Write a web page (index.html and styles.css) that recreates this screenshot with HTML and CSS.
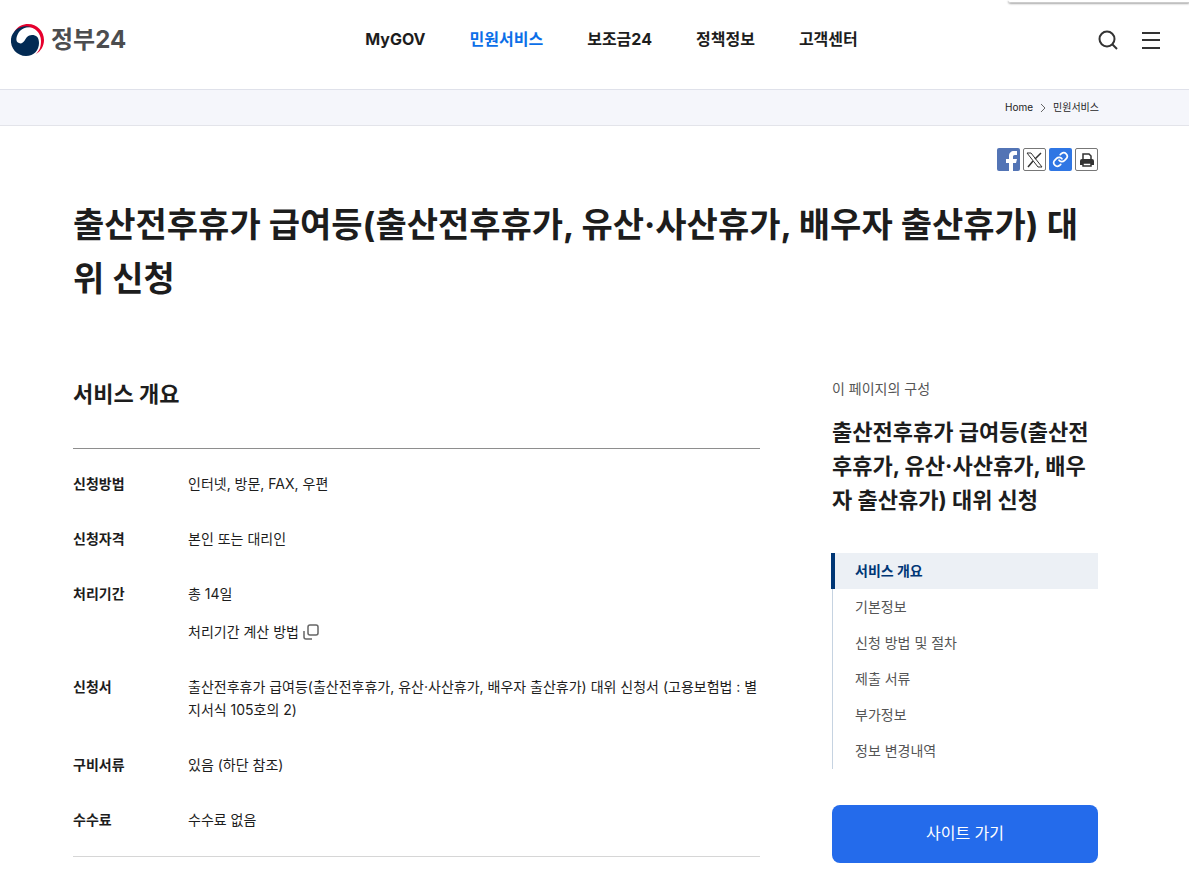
FILE: index.html
```html
<!DOCTYPE html>
<html lang="ko">
<head>
    <meta charset="UTF-8">
    <meta name="viewport" content="width=device-width, initial-scale=1.0">
    <title>출산전후휴가 급여등 대위 신청 | 정부24</title>
    <link rel="stylesheet" href="styles.css">
</head>
<body>
    <div class="top-panel"></div>
    <header class="header">
        <a href="#" class="logo">
            <svg width="34" height="34" viewBox="0 0 34 34" aria-hidden="true">
                <path d="M4 9C8 3 13 1 18 1C27 1 34 8 34 17C34 23 31 28 26 31C30 27 31 23 31 18C31 10 25 4 17 4C12 4 8 6 4 9Z" fill="#e6002d"/>
                <path d="M21 4C12 1 2 7 1 16C0 25 7 33 16 33C24 33 29 27 29 20C29 14 26 12 22 12C18 12 16 15 15 17C13 20 11 21 9 20C6 19 6 16 7 13C9 7 14 4 21 4Z" fill="#032b54"/>
            </svg>
            <span>정부24</span>
        </a>
        <nav class="gnb">
            <a href="#mygov">MyGOV</a>
            <a href="#service" class="active">민원서비스</a>
            <a href="#subsidy">보조금24</a>
            <a href="#policy">정책정보</a>
            <a href="#help">고객센터</a>
        </nav>
        <div class="header-tools">
            <button type="button" aria-label="검색">
                <svg width="20" height="20" viewBox="0 0 20 20" fill="none" stroke="#333" stroke-width="2">
                    <circle cx="9" cy="9" r="7.5"/>
                    <path d="M14 14L19 19"/>
                </svg>
            </button>
            <button type="button" aria-label="전체메뉴">
                <svg width="20" height="20" viewBox="0 0 20 20" fill="none" stroke="#333" stroke-width="2">
                    <path d="M1 3H19M1 10H19M1 18H19"/>
                </svg>
            </button>
        </div>
    </header>

    <div class="breadcrumb">
        <a href="#">Home</a>
        <svg width="6" height="8" viewBox="0 0 6 8" fill="none" stroke="#666"><path d="M1 0L5 4L1 8"/></svg>
        <a href="#service">민원서비스</a>
    </div>

    <main class="container">
        <div class="share">
            <button type="button" class="facebook" aria-label="페이스북">
                <svg width="23" height="23" viewBox="0 0 23 23"><path d="M12 23V15H9V11H12V8C12 5 14 3 17 3H20V7H18C16 7 16 8 16 9V11H20L19 15H16V23Z" fill="#fff"/></svg>
            </button>
            <button type="button" class="outline" aria-label="X">
                <svg width="17" height="17" viewBox="0 0 17 17" fill="none" stroke="#333"><path d="M1 2H5L16 16H12Z"/><path d="M15 2L9 8M7 10L2 16" stroke-width="1.5"/></svg>
            </button>
            <button type="button" class="link" aria-label="링크 복사">
                <svg width="17" height="17" viewBox="0 0 24 24" fill="none" stroke="#fff" stroke-width="2.4" stroke-linecap="round"><path d="M10 13a5 5 0 0 0 7.5.5l3-3a5 5 0 0 0-7-7l-1.8 1.7"/><path d="M14 11a5 5 0 0 0-7.5-.5l-3 3a5 5 0 0 0 7 7l1.8-1.7"/></svg>
            </button>
            <button type="button" class="outline" aria-label="인쇄">
                <svg width="16" height="16" viewBox="0 0 16 16"><path d="M4 7V2H10L12 4V7" fill="none" stroke="#333" stroke-width="1.5"/><path d="M3 7H13Q15 7 15 9V13H1V9Q1 7 3 7Z" fill="#333"/><path d="M4 11H12V14H4Z" fill="#fff" stroke="#333" stroke-width="1.5"/></svg>
            </button>
        </div>

        <h1>출산전후휴가 급여등(출산전후휴가, 유산·사산휴가, 배우자 출산휴가) 대위 신청</h1>

        <div class="content">
            <section class="overview" id="overview">
                <h2>서비스 개요</h2>
                <dl>
                    <dt>신청방법</dt>
                    <dd>인터넷, 방문, FAX, 우편</dd>
                    <dt>신청자격</dt>
                    <dd>본인 또는 대리인</dd>
                    <dt>처리기간</dt>
                    <dd>
                        <p>총 14일</p>
                        <a href="#period" class="popup-link">처리기간 계산 방법
                            <svg width="16" height="16" viewBox="0 0 16 16" fill="none" stroke="#666" stroke-width="1.5"><rect x="5" y="1" width="10" height="10" rx="2"/><path d="M1 7V13Q1 15 3 15H9"/></svg>
                        </a>
                    </dd>
                    <dt>신청서</dt>
                    <dd>출산전후휴가 급여등(출산전후휴가, 유산·사산휴가, 배우자 출산휴가) 대위 신청서 (고용보험법 : 별지서식 105호의 2)</dd>
                    <dt>구비서류</dt>
                    <dd>있음 (하단 참조)</dd>
                    <dt>수수료</dt>
                    <dd>수수료 없음</dd>
                </dl>
            </section>

            <aside class="side">
                <p class="side-label">이 페이지의 구성</p>
                <h2>출산전후휴가 급여등(출산전후휴가, 유산·사산휴가, 배우자 출산휴가) 대위 신청</h2>
                <ul>
                    <li><a href="#overview" class="active">서비스 개요</a></li>
                    <li><a href="#basic">기본정보</a></li>
                    <li><a href="#process">신청 방법 및 절차</a></li>
                    <li><a href="#documents">제출 서류</a></li>
                    <li><a href="#extra">부가정보</a></li>
                    <li><a href="#history">정보 변경내역</a></li>
                </ul>
                <button type="button" class="go-site">사이트 가기</button>
            </aside>
        </div>
    </main>
</body>
</html>
```
FILE: styles.css
```css
* {
    box-sizing: border-box;
}
body {
    margin: 0;
    font-family: Inter, "Noto Sans CJK KR", sans-serif;
    font-size: 14px;
    line-height: 23px;
    color: #1d1d1d;
    background-color: #fff;
    word-break: break-all;
}
a {
    color: inherit;
    text-decoration: none;
}
h1, h2, p, dl, dd, ul {
    margin: 0;
    padding: 0;
}
button {
    font-family: inherit;
    padding: 0;
    border: none;
    background: none;
    cursor: pointer;
}
svg {
    display: block;
}

/* Header */
.top-panel {
    position: absolute;
    top: 0;
    right: 0;
    width: 181px;
    height: 3px;
    border-bottom: 1px solid #ccc;
    border-radius: 0 0 0 10px;
    box-shadow: 0 1px 2px #aaa;
}
.header {
    display: grid;
    grid-template-columns: 1fr auto 1fr;
    align-items: center;
    height: 90px;
    padding: 0 28px 10px 10px;
    border-bottom: 1px solid #dfe1ea;
}
.logo {
    display: flex;
    align-items: center;
    gap: 7px;
    font-size: 24px;
    font-weight: 700;
    color: #4c4d4f;
}
.gnb {
    display: flex;
    gap: 44px;
    padding-left: 52px;
    font-size: 16px;
    font-weight: 700;
}
.gnb .active {
    color: #0b6fe8;
}
.header-tools {
    display: flex;
    justify-content: flex-end;
    gap: 23px;
}

/* Breadcrumb */
.breadcrumb {
    display: flex;
    justify-content: flex-end;
    align-items: center;
    gap: 7px;
    height: 36px;
    padding-right: 90px;
    font-size: 10px;
    background-color: #f5f6fb;
    border-bottom: 1px solid #e3e4ea;
}

.container {
    padding: 22px 91px 15px 73px;
}
.share {
    display: flex;
    justify-content: flex-end;
    gap: 3px;
}
.share button {
    display: flex;
    justify-content: center;
    align-items: center;
    width: 23px;
    height: 23px;
    border-radius: 2px;
}
.share .facebook {
    background-color: #5374b5;
}
.share .link {
    background-color: #2f76e4;
}
.share .outline {
    border: 1px solid #777;
}
h1 {
    margin-top: 27px;
    font-size: 34px;
    line-height: 54px;
    font-weight: 700;
}
.content {
    display: grid;
    grid-template-columns: 1fr 266px;
    gap: 72px;
    align-items: start;
    margin-top: 71px;
}

/* Service overview */
h2 {
    font-size: 22px;
    line-height: 34px;
    font-weight: 700;
}
.overview dl {
    display: grid;
    grid-template-columns: 115px 1fr;
    row-gap: 32px;
    margin-top: 37px;
    padding: 23px 0 25px;
    border-top: 1px solid #8e8e8e;
    border-bottom: 1px solid #d6d6d6;
}
dt {
    font-weight: 700;
}
.popup-link {
    display: flex;
    align-items: center;
    gap: 4px;
    margin-top: 15px;
}

/* Side navigation */
.side-label {
    color: #555;
}
.side h2 {
    margin-top: 15px;
}
.side ul {
    margin-top: 36px;
    list-style-type: none;
    border-left: 1px solid #c6d3e1;
}
.side li a {
    display: block;
    padding-left: 22px;
    line-height: 36px;
    color: #555;
}
.side li .active {
    margin-left: -2px;
    padding-left: 20px;
    border-left: 4px solid #003675;
    background-color: #ecf0f5;
    color: #003675;
    font-weight: 700;
}
.go-site {
    width: 100%;
    height: 58px;
    margin-top: 36px;
    padding-bottom: 4px;
    border-radius: 8px;
    background-color: #246beb;
    color: #fff;
    font-size: 16px;
}
```
